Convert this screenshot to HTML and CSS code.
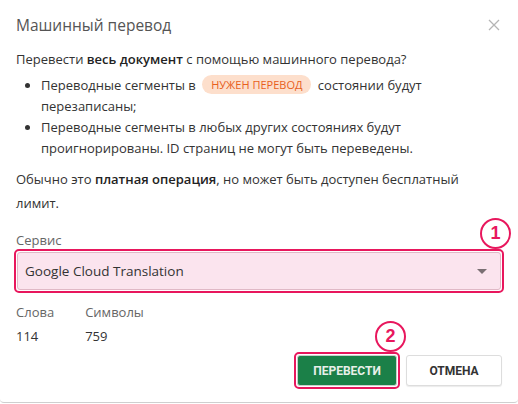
FILE: index.html
```html
<!DOCTYPE html>
<html lang="ru">
<head>
<meta charset="utf-8">
<link rel="stylesheet" href="styles.css">
</head>
<body>
<div class="dialog">
  <div class="header">
    <div class="title">Машинный перевод</div>
    <svg class="close" width="12" height="12" viewBox="0 0 12 12"><path d="M1 1L11 11M11 1L1 11" stroke="#b5b5b5" stroke-width="1.3"/></svg>
  </div>
  <div class="body">
    <p class="lead">Перевести <b>весь документ</b> с помощью машинного перевода?</p>
    <ul class="list">
      <li>Переводные сегменты в <span class="badge">НУЖЕН ПЕРЕВОД</span> состоянии будут<br>перезаписаны;</li>
      <li>Переводные сегменты в любых других состояниях будут<br>проигнорированы. ID страниц не могут быть переведены.</li>
    </ul>
    <p class="note">Обычно это <b>платная операция</b>, но может быть доступен бесплатный<br>лимит.</p>
    <div class="field">
      <div class="label">Сервис</div>
      <div class="hl hl-select">
        <div class="select">
          <span>Google Cloud Translation</span>
          <svg class="caret" width="10" height="5" viewBox="0 0 10 5"><path d="M0 0H10L5 5Z" fill="#7a6f73"/></svg>
        </div>
        <div class="num num1">1</div>
      </div>
    </div>
    <div class="stats">
      <div class="stat"><div class="stat-l">Слова</div><div class="stat-v">114</div></div>
      <div class="stat"><div class="stat-l">Символы</div><div class="stat-v">759</div></div>
    </div>
  </div>
  <div class="footer">
    <div class="hl hl-btn">
      <button class="btn primary">ПЕРЕВЕСТИ</button>
      <div class="num num2">2</div>
    </div>
    <button class="btn secondary">ОТМЕНА</button>
  </div>
</div>
</body>
</html>
```
FILE: styles.css
```css
* { box-sizing: border-box; }
html, body { margin: 0; padding: 0; background: #fff; }
body {
  font-family: "Open Sans", "Noto Sans", sans-serif;
  color: #333;
  font-size: 13px;
  width: 518px;
  height: 404px;
  overflow: hidden;
}
.dialog {
  width: 518px;
  height: 403px;
  border-bottom: 1px solid #cfcfcf;
  border-radius: 0 0 4px 4px;
  display: flex;
  flex-direction: column;
}
.header {
  display: flex;
  justify-content: space-between;
  align-items: center;
  padding: 7px 18px 0 16px;
  height: 42px;
}
.title { font-size: 15.5px; color: #555; }
.close { margin-top: 0; }
.body { padding: 0 16px; }
p { margin: 0; }
.lead { margin-top: 7px; line-height: 20px; }
b { font-weight: 600; color: #222; }
.list { margin: 6px 0 0; padding-left: 25px; line-height: 21px; }
.list li { padding-left: 0; }
.badge {
  display: inline-block;
  background: #fddfcc;
  color: #e8601c;
  font-size: 11px;
  line-height: 19px;
  padding: 0 9px;
  border-radius: 10px;
  margin: 0 3px;
  vertical-align: 1px;
}
.note { margin-top: 8px; line-height: 24px; }
.field { margin-top: 16px; }
.label { color: #666; line-height: 18px; }
.hl {
  position: relative;
  border: 2px solid #e8175d;
  border-radius: 5px;
  padding: 1px;
}
.hl-select { margin: 0 -2px 0; }
.select {
  height: 38px;
  background: #fbe4ee;
  border: 1px solid #e0b8c6;
  border-radius: 3px;
  display: flex;
  align-items: center;
  justify-content: space-between;
  padding: 0 13px 0 7px;
  color: #333;
  font-size: 13.5px;
}
.num {
  position: absolute;
  width: 31px;
  height: 31px;
  border: 2.5px solid #e8175d;
  border-radius: 50%;
  background: #fff;
  color: #e8175d;
  font-weight: 700;
  font-size: 18px;
  display: flex;
  align-items: center;
  justify-content: center;
  font-family: "Liberation Sans", sans-serif;
}
.num1 { right: -9px; top: -33px; }
.num2 { right: -8px; top: -33px; }
.stats { display: flex; margin-top: 9px; }
.stat { margin-right: 31px; }
.stat-l { color: #666; line-height: 20px; }
.stat-v { margin-top: 4px; line-height: 20px; }
.footer {
  display: flex;
  justify-content: flex-end;
  align-items: center;
  gap: 6px;
  padding: 0 16px 0 0;
  margin-top: 6px;
}
.hl-btn { padding: 1px; }
.btn {
  font-family: "Roboto", "Noto Sans", sans-serif;
  font-weight: 700;
  font-size: 12px;
  height: 31px;
  border-radius: 3px;
  cursor: pointer;
  display: block;
}
.primary {
  background: #1b8048;
  color: #e8efe9;
  border: 1px solid #c8d0cb;
  width: 100px;
}
.secondary {
  background: #fff;
  color: #333;
  border: 1px solid #ddd;
  width: 96px;
  box-shadow: 0 1px 1px rgba(0,0,0,0.08);
}
```
